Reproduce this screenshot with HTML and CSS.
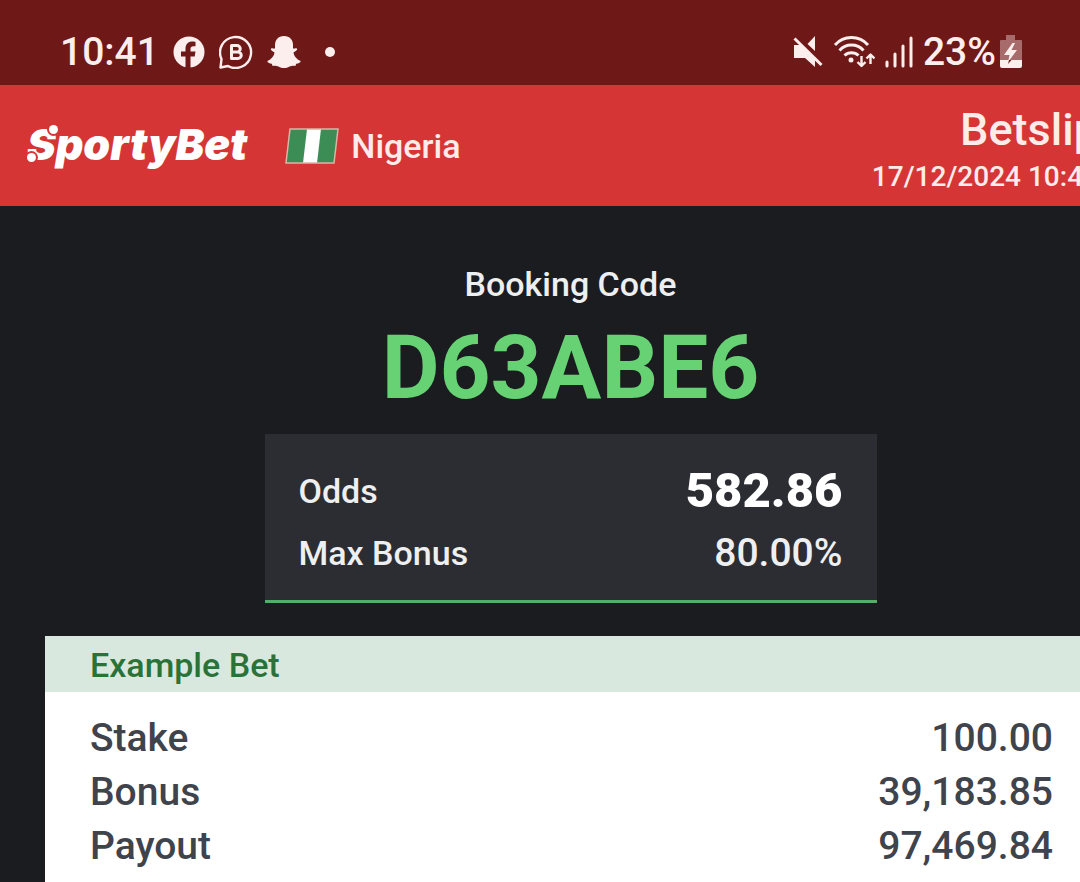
FILE: index.html
```html
<!DOCTYPE html>
<html lang="en">
<head>
<meta charset="utf-8">
<meta name="viewport" content="width=device-width, initial-scale=1">
<title>SportyBet Betslip</title>
<link rel="stylesheet" href="styles.css">
</head>
<body>
<div class="status">
  <div class="status-group">
    <time class="clock">10:41</time>
    <svg class="icon-app" viewBox="0 0 32 32" aria-label="Facebook"><circle cx="16" cy="16" r="15.500"/><path class="cut" d="M12.500 32V20.500H8V15.500h4.500V13c0-5 2.500-7.500 7-7.500 1.500 0 3 .3 3 .3v4.500h-2c-2 0-3 1-3 2.500v2.700h5l-.8 5H17.500V32z"/></svg>
    <svg class="icon-wa" viewBox="0 0 34 34" aria-label="WhatsApp Business"><path class="line" d="M1.500 32.500 2.500 24A15.500 15.500 0 1 1 9 31z"/><path class="line bold" d="M12.500 10.500H18a3 3 0 0 1 0 6.500h-5.500zm0 6.500H19a3 3 0 0 1 0 6.500h-6.500z"/></svg>
    <svg class="icon-snap" viewBox="0 0 34 32" aria-label="Snapchat"><path d="M17 0c-6 0-9 4-9 9v3.500c-1.500.5-3-.8-4 .3-1 1.400 2 2.700 3.500 3.800C7 20.500 4 23.500.8 24.800c-1.200 1 .8 2.500 4 2.900l.8 2.200c2-.3 4-.4 5.800.6C13.500 31.600 15 32 17 32s3.500-.4 5.600-1.500c1.800-1 3.800-.9 5.800-.6l.8-2.200c3.200-.4 5.200-1.900 4-2.900C30 23.500 27 20.500 26.500 16.600c1.500-1.100 4.500-2.400 3.500-3.800-1-1.100-2.500.2-4-.3V9c0-5-3-9-9-9z"/></svg>
    <span class="more"></span>
  </div>
  <div class="status-group status-right">
    <svg class="icon-mute" viewBox="0 0 30 34" aria-label="Muted"><path d="M1 10h6l15 14v8L12 23H1z M22 1v15L14.500 9z"/><path class="gap" d="M3 2.500 31 29"/><path class="line thick" d="M1.500 3.500 28.500 30"/></svg>
    <svg class="icon-wifi" viewBox="0 0 42 34" aria-label="Wi-Fi"><path class="line thick" d="M2 10a22 22 0 0 1 33 0M6.500 15.500a16 16 0 0 1 24 0M11.500 20.500a10 10 0 0 1 14 0"/><circle cx="18" cy="25" r="2.500"/><path class="line" d="M28.500 21v10m-4-4 4 4 4-4M37.500 29V19.500m-4 4 4-4 4 4"/></svg>
    <svg class="icon-signal" viewBox="0 0 28 32" aria-label="Signal"><path class="bar" d="M2 30v-4M10 30V18M18 30V10M26 30V2"/></svg>
    <div class="power">
      <span class="charge">23%</span>
      <svg class="icon-battery" viewBox="0 0 22 34" aria-label="Charging"><path class="faded" d="M6 0h9v5h6q1 0 1 1v19H0V6q0-1 1-1h5z"/><path d="M0 25h22v6q0 2-2 2H2q-2 0-2-2z"/><path d="M12.500 8 4 20h5.500L8 27l9-12h-5.500L15 8z"/><path class="cut" d="M9 25h2.500L8 29z"/></svg>
    </div>
  </div>
</div>
<div class="sheet">
  <header class="brandbar">
    <div class="brand">
      <span class="logo">SportyBet</span>
      <svg class="flag" viewBox="0 0 54 36" aria-label="Flag of Nigeria"><path class="flag-green" d="M5 1h48l-4 34H1z"/><path class="flag-white" d="M22 1h14l-4 34H18z"/><path class="flag-edge" d="M5 1h48l-4 34H1z"/></svg>
      <span class="country">Nigeria</span>
    </div>
    <div class="slip">
      <h1 class="slip-title">Betslip</h1>
      <time class="slip-date">17/12/2024 10:41</time>
    </div>
  </header>
  <main class="content">
    <section class="booking">
      <h2 class="booking-label">Booking Code</h2>
      <p class="booking-code">D63ABE6</p>
      <dl class="odds">
        <dt>Odds</dt><dd class="odds-value">582.86</dd>
        <dt>Max Bonus</dt><dd>80.00%</dd>
      </dl>
    </section>
    <section class="example">
      <h2 class="example-title">Example Bet</h2>
      <dl class="amounts">
        <dt>Stake</dt><dd>100.00</dd>
        <dt>Bonus</dt><dd>39,183.85</dd>
        <dt>Payout</dt><dd>97,469.84</dd>
      </dl>
    </section>
  </main>
</div>
</body>
</html>
```
FILE: styles.css
```css
* { box-sizing: border-box; margin: 0; padding: 0; }
html { background: #1b1c20; }
body {
  min-height: 100vh;
  display: flex;
  flex-direction: column;
  overflow: hidden;
  font-family: Roboto, "Liberation Sans", sans-serif;
  font-weight: 500;
  color: #eeeff1;
}
h1, h2 { font-weight: 500; }
svg { display: block; flex: none; fill: #fbeeed; }

/* Phone status bar */
.status {
  height: 85px;
  padding: 18px 58px 0 60px;
  display: flex;
  justify-content: space-between;
  align-items: center;
  background: #6e1817;
  color: #fbeeed;
}
.status-group { display: flex; align-items: center; gap: 14px; }
.status-right { gap: 10px; }
.clock, .charge { font-size: 39px; line-height: 48px; }
.power { display: flex; align-items: center; gap: 4px; }
.icon-app { width: 32px; height: 32px; }
.icon-wa { width: 34px; height: 34px; }
.icon-snap { width: 34px; height: 32px; }
.icon-mute { width: 30px; height: 34px; }
.icon-wifi { width: 42px; height: 34px; }
.icon-signal { width: 28px; height: 32px; }
.icon-battery { width: 22px; height: 34px; }
.more { width: 10px; height: 10px; margin-left: 10px; border-radius: 50%; background: #fbeeed; }
.cut { fill: #6e1817; }
.line { fill: none; stroke: #fbeeed; stroke-width: 2.4; stroke-linejoin: round; }
.bold { stroke-width: 3; }
.thick { stroke-width: 3; }
.gap { fill: none; stroke: #6e1817; stroke-width: 4; }
.bar { fill: none; stroke: #fbeeed; stroke-width: 3; stroke-linecap: round; }
.faded { fill: #a66b6a; }

/* The sheet runs past the right edge of the window */
.sheet {
  width: calc(100% + 61px);
  flex: 1;
  display: flex;
  flex-direction: column;
}
.brandbar {
  height: 121px;
  padding: 0 42px 0 27px;
  display: flex;
  justify-content: space-between;
  align-items: center;
  background: #d63535;
  color: #ffebe9;
}
.brand { display: flex; align-items: center; }
.logo {
  position: relative;
  color: #fff;
  font: italic 900 43px/54px Inter, sans-serif;
  margin-right: 38px;
  padding-bottom: 4px;
}
/* Ball-shaped ends of the logo's S */
.logo::before, .logo::after {
  content: "";
  position: absolute;
  width: 9px;
  height: 9px;
  border-radius: 50%;
  background: #fff;
  box-shadow: 0 0 0 2px #d63535;
}
.logo::before { left: 0; top: 36px; }
.logo::after { left: 22px; top: 8px; }
.flag { width: 54px; height: 36px; margin-right: 12px; }
.flag-green { fill: #3c8c55; }
.flag-white { fill: #fff; }
.flag-edge { fill: none; stroke: #d9b5a5; stroke-width: 1.500; }
.country { font-size: 34px; line-height: 40px; }
.slip { display: flex; flex-direction: column; align-items: flex-end; padding-top: 8px; }
.slip-title { font-size: 45px; line-height: 54px; }
.slip-date { font-size: 28px; line-height: 40px; }

.content { flex: 1; display: flex; flex-direction: column; padding: 56px 45px 0; }
.booking { display: flex; flex-direction: column; align-items: center; }
.booking-label { font-size: 34px; line-height: 44px; }
.booking-code { font-size: 89px; line-height: 124px; font-weight: 700; color: #67d274; }
.odds {
  width: 612px;
  margin-top: 4px;
  padding: 26px 34px 16px;
  display: grid;
  grid-template-columns: 1fr auto;
  align-items: center;
  background: #2c2d32;
  border-bottom: 3px solid #55ad68;
  font-size: 34px;
  line-height: 62px;
}
.odds dd { font-size: 39px; text-align: right; }
.odds .odds-value { font-size: 49px; font-weight: 900; color: #fff; }

.example { flex: 1; margin-top: 33px; background: #fff; }
.example-title {
  padding: 0 45px;
  background: #d9e8de;
  color: #2a7238;
  font-size: 34px;
  line-height: 58px;
  height: 56px;
}
.amounts {
  padding: 19px 43px 0 45px;
  display: grid;
  grid-template-columns: 1fr auto;
  color: #3f434c;
  font-size: 39px;
  line-height: 54px;
}
.amounts dd { text-align: right; }
```
